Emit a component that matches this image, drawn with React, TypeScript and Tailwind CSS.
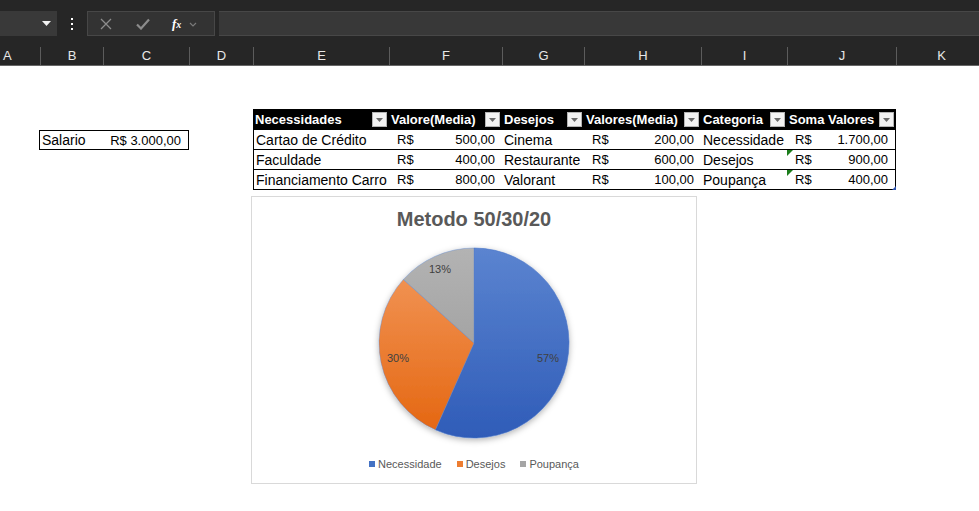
import { ReactNode } from "react";

// Colonnes visibles de la feuille (largeurs en px)
const columns = [
  { letter: "A", width: 40 },
  { letter: "B", width: 63 },
  { letter: "C", width: 86 },
  { letter: "D", width: 64 },
  { letter: "E", width: 136 },
  { letter: "F", width: 113 },
  { letter: "G", width: 82 },
  { letter: "H", width: 117 },
  { letter: "I", width: 86 },
  { letter: "J", width: 109 },
  { letter: "K", width: 90 },
];

const rows = [
  ["Cartao de Crédito", "500,00", "Cinema", "200,00", "Necessidade", "1.700,00"],
  ["Faculdade", "400,00", "Restaurante", "600,00", "Desejos", "900,00"],
  ["Financiamento Carro", "800,00", "Valorant", "100,00", "Poupança", "400,00"],
];

function FilterButton() {
  return (
    <span className="flex h-[15px] w-[15px] shrink-0 items-center justify-center border border-[#b4b4b4] bg-[#f2f2f2]">
      <svg width="7" height="4" viewBox="0 0 7 4">
        <path d="M0 0h7L3.5 4z" fill="#6a6a6a" />
      </svg>
    </span>
  );
}

function HeaderCell({ label, width }: { label: string; width: number }) {
  return (
    <div
      className="flex h-full items-center justify-between pl-[2px] pr-[2px]"
      style={{ width }}
    >
      <span className="whitespace-nowrap text-[13px] font-bold text-white">{label}</span>
      <FilterButton />
    </div>
  );
}

function MoneyCell({ value, width }: { value: string; width: number }) {
  return (
    <div className="flex h-full items-center justify-between pl-[8px] pr-[7px] text-[13px]" style={{ width }}>
      <span>R$</span>
      <span>{value}</span>
    </div>
  );
}

function TextCell({ children, width }: { children: ReactNode; width: number }) {
  return (
    <div className="flex h-full items-center whitespace-nowrap pl-[2px]" style={{ width }}>
      {children}
    </div>
  );
}

function GreenFlag() {
  return (
    <span className="absolute left-0 top-0 h-0 w-0 border-r-[6px] border-t-[6px] border-r-transparent border-t-[#1b7d1b]" />
  );
}

function PieChart() {
  return (
    <svg width="200" height="200" viewBox="0 0 200 200" className="overflow-visible">
      <defs>
        <linearGradient id="blue" x1="0" y1="5" x2="0" y2="195" gradientUnits="userSpaceOnUse">
          <stop offset="0" stopColor="#5b84d0" />
          <stop offset="1" stopColor="#2f5cb8" />
        </linearGradient>
        <linearGradient id="orange" x1="0" y1="5" x2="0" y2="195" gradientUnits="userSpaceOnUse">
          <stop offset="0" stopColor="#f39a5e" />
          <stop offset="1" stopColor="#e4650f" />
        </linearGradient>
        <linearGradient id="grey" x1="0" y1="5" x2="0" y2="195" gradientUnits="userSpaceOnUse">
          <stop offset="0" stopColor="#b3b3b3" />
          <stop offset="1" stopColor="#959595" />
        </linearGradient>
        <filter id="shadow" x="-20%" y="-20%" width="140%" height="140%">
          <feDropShadow dx="0" dy="2" stdDeviation="3" floodColor="#000" floodOpacity="0.3" />
        </filter>
      </defs>
      <g filter="url(#shadow)">
        <path d="M100 100 L100 5 A95 95 0 1 1 61.4 186.8 Z" fill="url(#blue)" stroke="#4a76c8" strokeWidth="0.6" />
        <path d="M100 100 L61.4 186.8 A95 95 0 0 1 29.4 36.4 Z" fill="url(#orange)" stroke="#5a86d0" strokeWidth="0.4" />
        <path d="M100 100 L29.4 36.4 A95 95 0 0 1 100 5 Z" fill="url(#grey)" stroke="#5a86d0" strokeWidth="0.4" />
      </g>
      <g fontSize="11" fill="#404040" textAnchor="middle" dominantBaseline="middle" fontFamily="'Liberation Sans', Arial, sans-serif">
        <text x="174" y="116">57%</text>
        <text x="24" y="116">30%</text>
        <text x="66" y="27">13%</text>
      </g>
    </svg>
  );
}

function LegendItem({ color, label }: { color: string; label: string }) {
  return (
    <div className="flex items-center gap-[3px]">
      <span className="h-[6px] w-[6px]" style={{ backgroundColor: color }} />
      <span>{label}</span>
    </div>
  );
}

export default function App() {
  const w = columns.map((c) => c.width);
  const tableCols = w.slice(4, 10);

  return (
    <div className="relative h-[511px] w-[979px] overflow-hidden bg-white font-['Liberation_Sans',Arial,sans-serif]">
      {/* Barre de formule */}
      <div className="flex h-[36px] items-end bg-[#262626] pb-0">
        <div className="flex h-[25px] w-[57px] items-center justify-end bg-[#393939] pr-[6px]">
          <svg width="9" height="5" viewBox="0 0 9 5">
            <path d="M0 0h9L4.5 5z" fill="#f2f2f2" />
          </svg>
        </div>
        <div className="flex h-[25px] w-[30px] flex-col items-center justify-center gap-[3px]">
          <span className="h-[2px] w-[2px] bg-white" />
          <span className="h-[2px] w-[2px] bg-white" />
          <span className="h-[2px] w-[2px] bg-white" />
        </div>
        <div className="flex h-[25px] w-[128px] items-center border border-[#474747] bg-[#333333]">
          <svg width="12" height="12" viewBox="0 0 12 12" className="ml-[12px]">
            <path d="M1 1l10 10M11 1L1 11" stroke="#8c8c8c" strokeWidth="1.3" />
          </svg>
          <svg width="14" height="12" viewBox="0 0 14 12" className="ml-[24px]">
            <path d="M1 6.5l4 4L13 1.5" fill="none" stroke="#8c8c8c" strokeWidth="2.2" />
          </svg>
          <span className="ml-[22px] font-['Liberation_Serif',serif] text-[13px] font-bold italic leading-none text-white">
            f<span className="text-[10px]">x</span>
          </span>
          <svg width="8" height="5" viewBox="0 0 8 5" className="ml-[8px] mt-[2px]">
            <path d="M1 1l3 3 3-3" fill="none" stroke="#7a7a7a" strokeWidth="1.2" />
          </svg>
        </div>
        <div className="ml-[4px] h-[25px] flex-1 border-y border-[#474747] bg-[#383838]" />
      </div>

      {/* En-têtes de colonnes */}
      <div className="flex h-[30px] items-end border-b border-[#666666] bg-[#262626] text-[13px] text-[#e8e8e8]">
        {columns.map((c, i) => (
          <div
            key={c.letter}
            className={`flex h-[18px] shrink-0 items-center ${i === 0 ? "justify-start pl-[3px]" : "justify-center border-l border-[#5c5c5c]"}`}
            style={{ width: c.width }}
          >
            {c.letter}
          </div>
        ))}
      </div>

      {/* Feuille */}
      <div className="pt-[43px] text-[14px] leading-none text-black">
        {/* Ligne d'en-tête du tableau */}
        <div className="flex h-[21px]">
          <div className="w-[253px] shrink-0" />
          <div className="flex h-full bg-black">
            <HeaderCell label="Necessidades" width={tableCols[0]} />
            <HeaderCell label="Valore(Media)" width={tableCols[1]} />
            <HeaderCell label="Desejos" width={tableCols[2]} />
            <HeaderCell label="Valores(Media)" width={tableCols[3]} />
            <HeaderCell label="Categoria" width={tableCols[4]} />
            <HeaderCell label="Soma Valores" width={tableCols[5]} />
          </div>
        </div>

        {rows.map((r, idx) => (
          <div key={idx} className="flex h-[20px]">
            <div className="w-[253px] shrink-0">
              {idx === 0 && (
                <div className="ml-[39px] flex h-[20px] w-[150px] items-center justify-between border border-black pl-[2px] pr-[7px]">
                  <span>Salario</span>
                  <span className="text-[13px]">R$ 3.000,00</span>
                </div>
              )}
            </div>
            <div className="relative flex h-full border-x border-b border-black">
              <TextCell width={tableCols[0] - 1}>{r[0]}</TextCell>
              <MoneyCell value={r[1]} width={tableCols[1]} />
              <TextCell width={tableCols[2]}>{r[2]}</TextCell>
              <MoneyCell value={r[3]} width={tableCols[3]} />
              <TextCell width={tableCols[4]}>{r[4]}</TextCell>
              <div className="relative h-full">
                {idx > 0 && <GreenFlag />}
                <MoneyCell value={r[5]} width={tableCols[5] - 1} />
              </div>
              {idx === rows.length - 1 && (
                <span className="absolute bottom-[-1px] right-[-1px] h-0 w-0 border-b-[4px] border-l-[4px] border-b-[#2f55b0] border-l-transparent" />
              )}
            </div>
          </div>
        ))}

        {/* Graphique */}
        <div className="ml-[251px] mt-[6px] flex h-[288px] w-[446px] flex-col items-center border border-[#d9d9d9] bg-white">
          <div className="mt-[10px] text-[20px] font-bold leading-[24px] text-[#595959]">Metodo 50/30/20</div>
          <div className="mt-[12px]">
            <PieChart />
          </div>
          <div className="mt-[14px] flex items-center gap-[15px] text-[11px] leading-[14px] text-[#595959]">
            <LegendItem color="#4472c4" label="Necessidade" />
            <LegendItem color="#ed7d31" label="Desejos" />
            <LegendItem color="#a5a5a5" label="Poupança" />
          </div>
        </div>
      </div>
    </div>
  );
}
